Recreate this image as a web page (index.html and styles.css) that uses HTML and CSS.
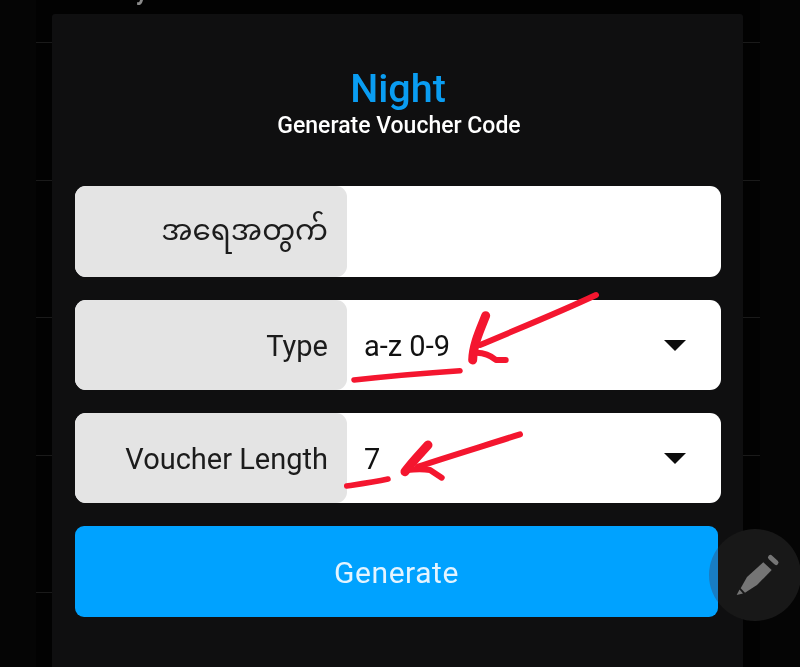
FILE: index.html
```html
<!DOCTYPE html>
<html lang="my">
<head>
<meta charset="utf-8">
<title>Night</title>
<link rel="stylesheet" href="styles.css">
</head>
<body>
<div class="behind">
  <div class="behind-title">user Key</div>
  <div class="behind-row"></div>
  <div class="behind-row"></div>
  <div class="behind-row"></div>
  <div class="behind-row"></div>
  <div class="behind-row"></div>
</div>
<main class="modal">
  <h1 class="brand">Night</h1>
  <p class="subtitle">Generate Voucher Code</p>
  <form class="form">
    <div class="field">
      <div class="label label-my">အရေအတွက်</div>
      <div class="value"></div>
    </div>
    <div class="field">
      <div class="label">Type</div>
      <div class="value"><span>a-z 0-9</span><i class="caret"></i></div>
    </div>
    <div class="field">
      <div class="label">Voucher Length</div>
      <div class="value"><span>7</span><i class="caret"></i></div>
    </div>
    <button class="generate" type="button">Generate</button>
  </form>
</main>
<div class="fab-shade"></div>
<div class="fab-fill"></div>
<svg class="fab-icon" viewBox="0 0 92 92" width="92" height="92">
  <path class="pencil" d="M31.7 59.3 L38 48 L54.3 33.3 L62.7 41 L48 56 L36 63.7 Z"/>
  <path class="pencil" d="M27.7 66 L30.5 60.5 L34 64.5 Z"/>
  <path class="pencil-end" d="M61.5 28.5 L67 33.5"/>
</svg>
<svg class="marks" viewBox="0 0 800 667" width="800" height="667">
  <path class="shaft" d="M596 295 C560 312 520 328 480 345"/>
  <path class="head" d="M485.7 315.7 C480 330 473 345 472.7 360"/>
  <path class="barb" d="M473 353 C482 352 490 355 496 360 L505.7 360"/>
  <path class="line" d="M354 380 C390 376 425 373 460 370.7"/>
  <path class="shaft" d="M520 434.3 C490 444 450 456 418 466.7"/>
  <path class="head" d="M428 445 C420 454 412 462 405 471.7"/>
  <path class="barb" d="M406.7 470 C416 469 424 469 430 470 L441.7 477.7"/>
  <path class="line" d="M346.7 486 C360 484 374 482 388 479"/>
</svg>
</body>
</html>
```
FILE: styles.css
```css
* { box-sizing: border-box; }
html, body { margin: 0; height: 100%; }
body {
  width: 800px;
  height: 667px;
  overflow: hidden;
  background: #050505;
  font-family: Roboto, "Noto Sans", "Noto Sans Myanmar", sans-serif;
  position: relative;
}
.behind {
  margin-left: 36px;
  width: 724px;
  height: 667px;
  overflow: hidden;
  background: #020202;
}
.behind-title {
  height: 50px;
  margin-top: -8px;
  padding-left: 22px;
  color: #8a8a8a;
  font-size: 23px;
  font-weight: 700;
  line-height: 2px;
  white-space: nowrap;
}
.behind-row {
  height: 137.5px;
  border-top: 1px solid #1a1a1a;
}
.modal {
  position: absolute;
  left: 52px;
  top: 14px;
  width: 691px;
  height: 653px;
  background: #0f0f10;
  border-radius: 3px 3px 0 0;
  padding-top: 54px;
  text-align: center;
}
.brand {
  margin: 0 0 0 1px;
  color: #0a9df2;
  font-size: 39.5px;
  font-weight: 500;
  line-height: 42px;
}
.subtitle {
  margin: 1px 0 0 3px;
  color: #fff;
  font-size: 23px;
  font-weight: 500;
  line-height: 30px;
}
.form {
  display: flex;
  flex-direction: column;
  gap: 23px;
  margin: 45px 22px 0 23px;
}
.field {
  display: flex;
  height: 90px;
  background: #fff;
  border-radius: 11px;
}
.field:first-child { height: 91px; }
.label {
  width: 272px;
  background: #e4e4e4;
  border-radius: 11px;
  padding: 1px 19px 0 0;
  display: flex;
  align-items: center;
  justify-content: flex-end;
  color: #1c1c1c;
  font-size: 29px;
}
.label-my { font-size: 29.3px; padding-top: 2px; }
.value {
  flex: 1;
  display: flex;
  align-items: center;
  justify-content: space-between;
  padding: 1px 35px 0 17px;
  color: #111;
  font-size: 29px;
}
.caret {
  width: 0;
  height: 0;
  border-left: 11px solid transparent;
  border-right: 11px solid transparent;
  border-top: 11px solid #0c0c0c;
}
.generate {
  width: 643px;
  height: 91px;
  border: 0;
  border-radius: 9px;
  background: #00a2ff;
  color: #e4f4ff;
  font-family: inherit;
  font-size: 30px;
  letter-spacing: 0.55px;
  padding: 2px 0 0 0;
}
.fab-shade, .fab-fill, .fab-icon {
  position: absolute;
  left: 709px;
  top: 529px;
  width: 92px;
  height: 92px;
  border-radius: 50%;
}
.fab-shade { background: #c4c4c4; mix-blend-mode: multiply; }
.fab-fill { background: #181818; mix-blend-mode: lighten; }
.pencil { fill: #757575; }
.pencil-end {
  fill: none;
  stroke: #757575;
  stroke-width: 5px;
  stroke-linecap: round;
}
.marks { position: absolute; left: 0; top: 0; pointer-events: none; }
.marks path {
  fill: none;
  stroke: #f4162f;
  stroke-linecap: round;
  stroke-linejoin: round;
}
.marks .shaft { stroke-width: 6px; }
.marks .head { stroke-width: 9px; }
.marks .barb { stroke-width: 6px; }
.marks .line { stroke-width: 5.5px; }
```
